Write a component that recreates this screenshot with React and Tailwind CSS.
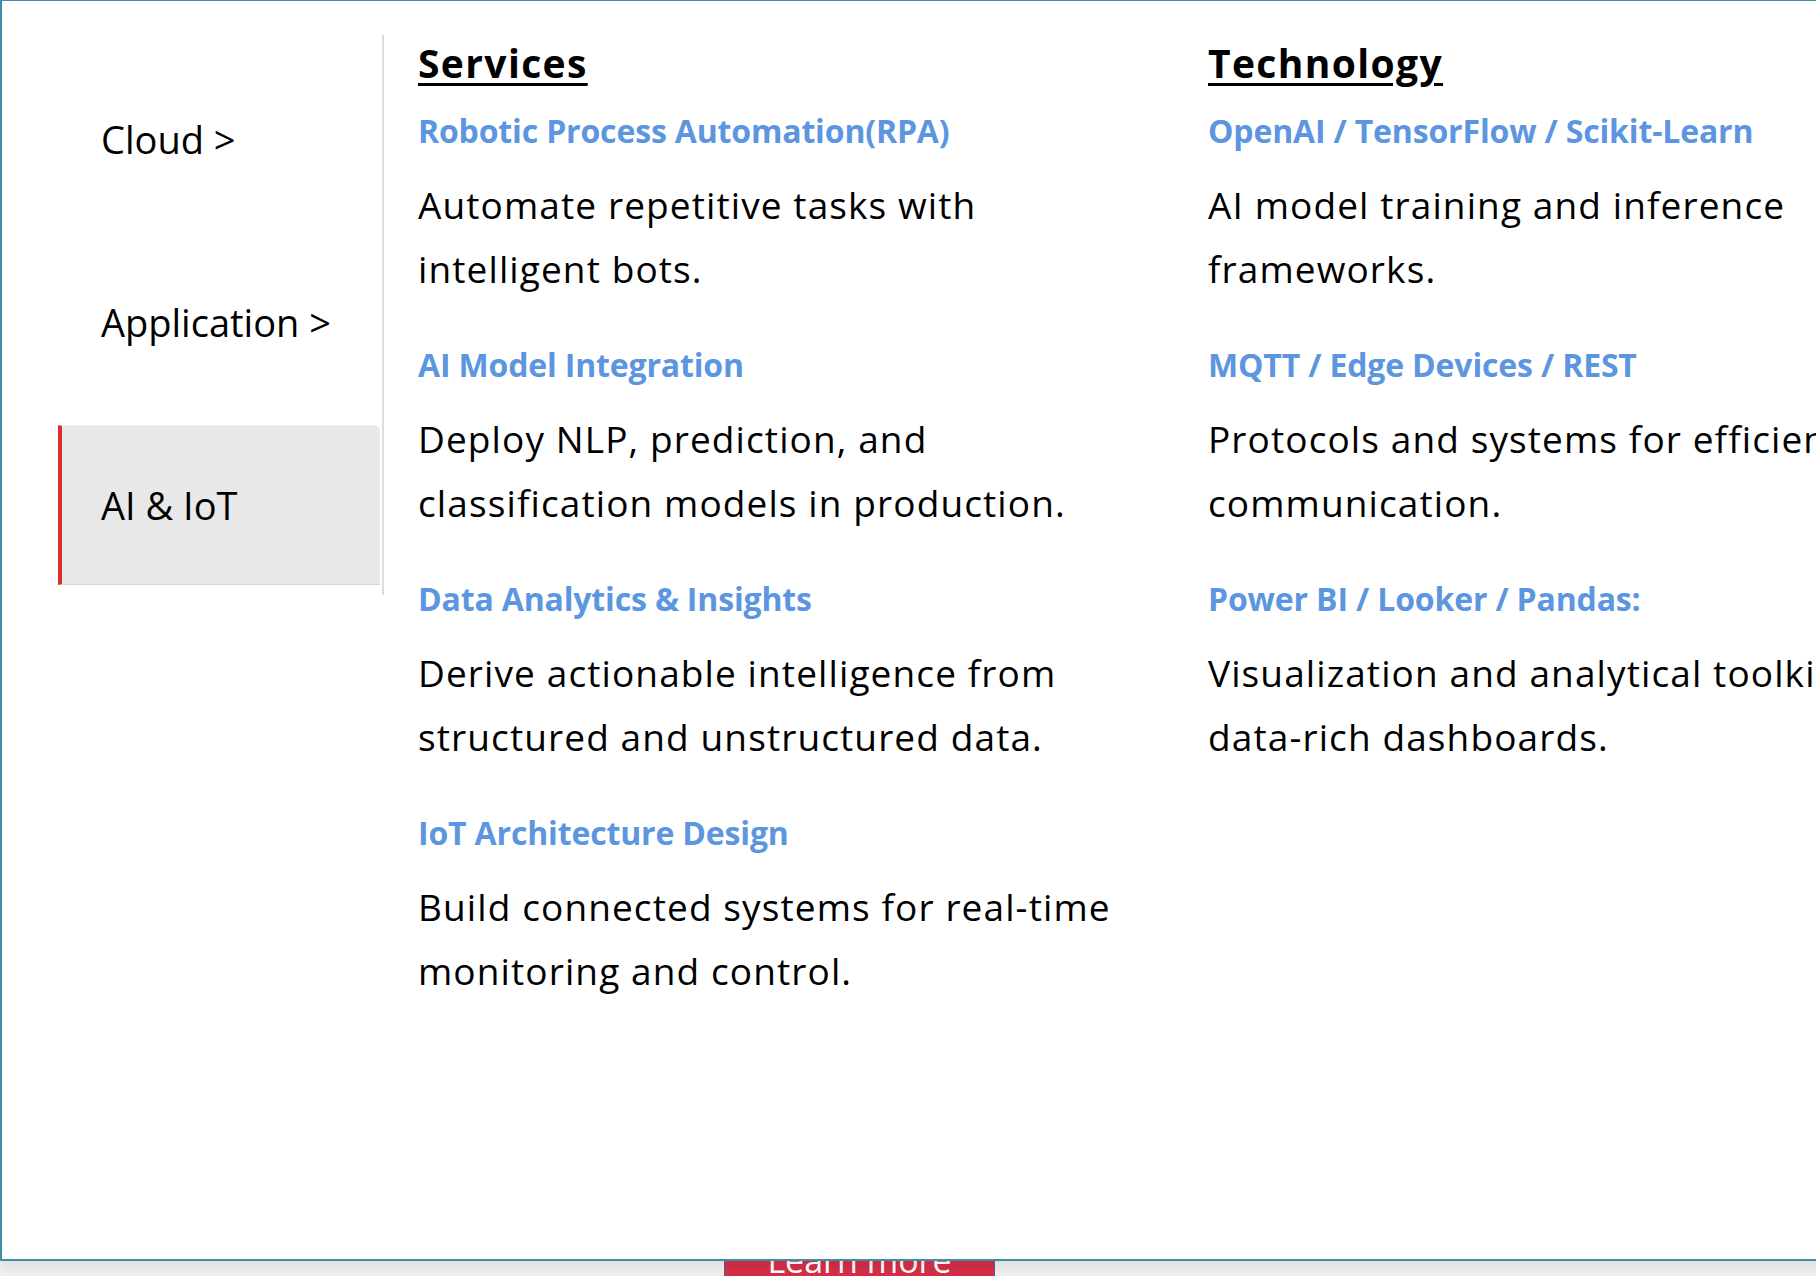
import React from 'react';

const categories = [
  { label: 'Cloud >', active: false },
  { label: 'Application >', active: false },
  { label: 'AI & IoT', active: true },
];

const services = [
  { title: 'Robotic Process Automation(RPA)', text: 'Automate repetitive tasks with intelligent bots.' },
  { title: 'AI Model Integration', text: 'Deploy NLP, prediction, and classification models in production.' },
  { title: 'Data Analytics & Insights', text: 'Derive actionable intelligence from structured and unstructured data.' },
  { title: 'IoT Architecture Design', text: 'Build connected systems for real-time monitoring and control.' },
];

const technology = [
  { title: 'OpenAI / TensorFlow / Scikit-Learn', text: 'AI model training and inference frameworks.' },
  { title: 'MQTT / Edge Devices / REST', text: 'Protocols and systems for efficient communication.' },
  { title: 'Power BI / Looker / Pandas:', text: 'Visualization and analytical toolkits for data-rich dashboards.' },
];

const Column = ({ heading, items, width }) => (
  <div className={`${width} shrink-0`}>
    <h2 className="text-[39px] leading-[48px] font-bold text-black underline decoration-[3px] underline-offset-[5px] tracking-[0.035em]">
      {heading}
    </h2>
    <div className="flex flex-col gap-[44px] mt-[24px]">
      {items.map((item) => (
        <div key={item.title}>
          <h3 className="text-[32px] leading-[40px] font-bold text-[#5c96e0] tracking-[-0.005em]">{item.title}</h3>
          <p className="mt-[22px] text-[37px] leading-[64px] text-black tracking-[0.03em]">{item.text}</p>
        </div>
      ))}
    </div>
  </div>
);

export default function App() {
  return (
    <div className="relative w-full h-[1276px] overflow-hidden bg-[#f0f0f0] font-['Open_Sans',sans-serif]">
      {/* page content behind the menu */}
      <div className="pt-[1220px] pl-[724px]">
        <button className="w-[271px] h-[80px] bg-[#d52e48] border-x border-[#3d6a94] text-white text-[34px] leading-[80px]">
          Learn more
        </button>
      </div>

      {/* Mega menu */}
      <div className="absolute top-0 left-0 w-[2100px] h-[1261px] bg-white border-t border-l-2 border-b-2 border-[#3d8fa8] shadow-[0_6px_14px_rgba(0,0,0,0.08)] flex">
        <div className="ml-[56px] mt-[34px] w-[326px] h-[560px] border-r-2 border-[#dddddd] pt-[24px] flex flex-col gap-[23px]">
          {categories.map((cat) => (
            <div
              key={cat.label}
              className={`h-[160px] w-[322px] flex items-center pl-[39px] border-l-4 rounded-tr-[6px] text-[38px] text-black ${
                cat.active ? 'border-[#d9302c] bg-[#e8e8e8] border-b border-b-[#d6d6d6] border-t border-t-[#eeeeee]' : 'border-transparent'
              }`}
            >
              {cat.label}
            </div>
          ))}
        </div>

        <div className="pl-[34px] pt-[38px] flex gap-[65px]">
          <Column heading="Services" items={services} width="w-[725px]" />
          <Column heading="Technology" items={technology} width="w-[760px]" />
        </div>
      </div>
    </div>
  );
}
